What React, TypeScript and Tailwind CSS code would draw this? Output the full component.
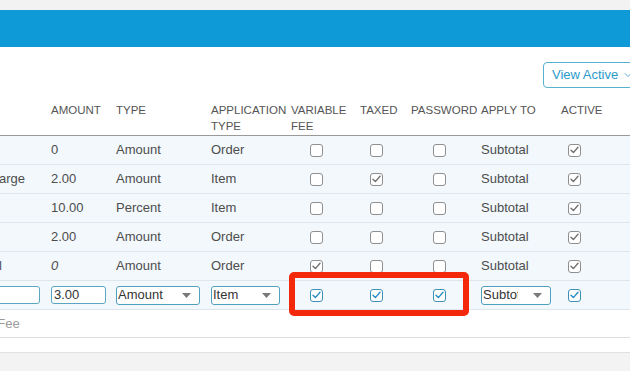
import React from 'react';
import { ChevronDown } from 'lucide-react';

type Fee = {
  name: string;
  amount: string;
  italic?: boolean;
  type: string;
  appType: string;
  variable: boolean;
  taxed: boolean;
  password: boolean;
  applyTo: string;
  active: boolean;
};

const fees: Fee[] = [
  { name: 'Delivery', amount: '0', type: 'Amount', appType: 'Order', variable: false, taxed: false, password: false, applyTo: 'Subtotal', active: true },
  { name: 'Credit Card Surcharge', amount: '2.00', type: 'Amount', appType: 'Item', variable: false, taxed: true, password: false, applyTo: 'Subtotal', active: true },
  { name: 'Service', amount: '10.00', type: 'Percent', appType: 'Item', variable: false, taxed: false, password: false, applyTo: 'Subtotal', active: true },
  { name: 'Bag Fee', amount: '2.00', type: 'Amount', appType: 'Order', variable: false, taxed: false, password: false, applyTo: 'Subtotal', active: true },
  { name: 'Open Item Manual', amount: '0', italic: true, type: 'Amount', appType: 'Order', variable: true, taxed: false, password: false, applyTo: 'Subtotal', active: true },
];

const Checkbox = ({ checked, editing }: { checked: boolean; editing?: boolean }) => (
  <span
    className={`flex w-[13px] h-[13px] items-center justify-center rounded-[3px] border bg-white ${
      editing ? 'border-[#3f8fb8]' : 'border-[#8f8f8f]'
    }`}
  >
    {checked && (
      <svg width="9" height="8" viewBox="0 0 9 8" fill="none">
        <path
          d="M1 4.2L3.4 6.6L8 1.2"
          stroke={editing ? '#2b8cc4' : '#707070'}
          strokeWidth="1.4"
          strokeLinecap="round"
          strokeLinejoin="round"
        />
      </svg>
    )}
  </span>
);

const Select = ({ value, width }: { value: string; width: string }) => (
  <div className={`flex h-[19px] ${width} items-center rounded-[3px] border border-[#4f9fbf] bg-white pl-[1px] pr-[8px]`}>
    <span className="flex-1 overflow-hidden whitespace-nowrap text-[#333]">{value}</span>
    <svg className="ml-[15px] shrink-0" width="9" height="5" viewBox="0 0 9 5">
      <path d="M0 0H9L4.5 5Z" fill="#7a7a7a" />
    </svg>
  </div>
);

const cols = {
  name: 'w-[156px] pl-[5px]',
  amount: 'w-[65px] pl-[5px]',
  type: 'w-[95px] pl-[5px]',
  appType: 'w-[80px] pl-[5px]',
  variable: 'w-[69px] pl-[5px]',
  taxed: 'w-[51px] pl-[5px]',
  password: 'w-[70px] pl-[5px]',
  applyTo: 'w-[80px] pl-[5px]',
  active: 'w-[80px] pl-[5px]',
};

export default function App() {
  return (
    <div
      className="relative h-[371px] w-[630px] overflow-hidden bg-white text-[13px] text-[#4d4d4d]"
      style={{ fontFamily: '"Liberation Sans", Arial, sans-serif' }}
    >
      <div className="h-[10px] bg-[#f2f2f2]" />
      <div className="h-[37px] bg-[#0d9ad7]" />

      <div className="flex h-[53px] items-start justify-end pt-[15px]">
        <button className="-mr-[12px] flex h-[26px] w-[99px] shrink-0 items-center rounded-[4px] border border-[#58b1d0] bg-white pl-[8px] text-[13px] text-[#2a9bcb]">
          View Active
          <ChevronDown className="ml-[4px] h-[12px] w-[12px]" strokeWidth={1.5} />
        </button>
      </div>

      <div className="-ml-[110px] w-[746px]">
        <div className="flex h-[36px] items-start border-b border-[#9a9a9a] pt-[2px] text-[11.5px] leading-[16px] text-[#555]">
          <div className={cols.name} />
          <div className={cols.amount}>AMOUNT</div>
          <div className={cols.type}>TYPE</div>
          <div className={cols.appType}>APPLICATION TYPE</div>
          <div className={cols.variable}>VARIABLE FEE</div>
          <div className={cols.taxed}>TAXED</div>
          <div className={cols.password}>PASSWORD</div>
          <div className={cols.applyTo}>APPLY TO</div>
          <div className={cols.active}>ACTIVE</div>
        </div>

        {fees.map((fee) => (
          <div key={fee.name} className="flex h-[29px] items-center border-b border-[#dce6ec] bg-[#f2f8fc]">
            <div className={`${cols.name} whitespace-nowrap`}>{fee.name}</div>
            <div className={`${cols.amount} ${fee.italic ? 'italic' : ''}`}>{fee.amount}</div>
            <div className={cols.type}>{fee.type}</div>
            <div className={cols.appType}>{fee.appType}</div>
            <div className={`${cols.variable} pl-[24px]`}>
              <Checkbox checked={fee.variable} />
            </div>
            <div className={`${cols.taxed} pl-[15px]`}>
              <Checkbox checked={fee.taxed} />
            </div>
            <div className={`${cols.password} pl-[27px]`}>
              <Checkbox checked={fee.password} />
            </div>
            <div className={cols.applyTo}>{fee.applyTo}</div>
            <div className={`${cols.active} pl-[12px]`}>
              <Checkbox checked={fee.active} />
            </div>
          </div>
        ))}

        <div className="flex h-[29px] items-center border-b border-[#dce6ec] bg-[#f2f8fc]">
          <div className={`${cols.name} pr-[6px]`}>
            <input
              className="h-[18px] w-full rounded-[3px] border border-[#5aa6c2] bg-white px-[2px] text-[13px] text-[#333] outline-none"
              defaultValue="Delivery Charge"
            />
          </div>
          <div className={cols.amount}>
            <input
              className="h-[18px] w-[55px] rounded-[3px] border border-[#5aa6c2] bg-white px-[2px] text-[13px] text-[#333] outline-none"
              defaultValue="3.00"
            />
          </div>
          <div className={cols.type}>
            <Select value="Amount" width="w-[84px]" />
          </div>
          <div className={cols.appType}>
            <Select value="Item" width="w-[69px]" />
          </div>
          <div className={`${cols.variable} pl-[24px]`}>
            <Checkbox checked editing />
          </div>
          <div className={`${cols.taxed} pl-[15px]`}>
            <Checkbox checked editing />
          </div>
          <div className={`${cols.password} pl-[27px]`}>
            <Checkbox checked editing />
          </div>
          <div className={cols.applyTo}>
            <Select value="Subtotal" width="w-[70px]" />
          </div>
          <div className={`${cols.active} pl-[12px]`}>
            <Checkbox checked editing />
          </div>
        </div>
      </div>

      <div className="flex h-[28px] items-center border-b border-[#dedede]">
        <span className="-ml-[40px] whitespace-nowrap text-[#9a9a9a]">+ Add Fee</span>
      </div>
      <div className="h-[14px]" />
      <div className="h-[20px] border-t border-[#e2e2e2] bg-[#f3f3f3]" />

      <div className="absolute left-[289px] top-[272px] h-[44px] w-[180px] rounded-[5px] border-[6px] border-[#f4290c]" />
    </div>
  );
}
